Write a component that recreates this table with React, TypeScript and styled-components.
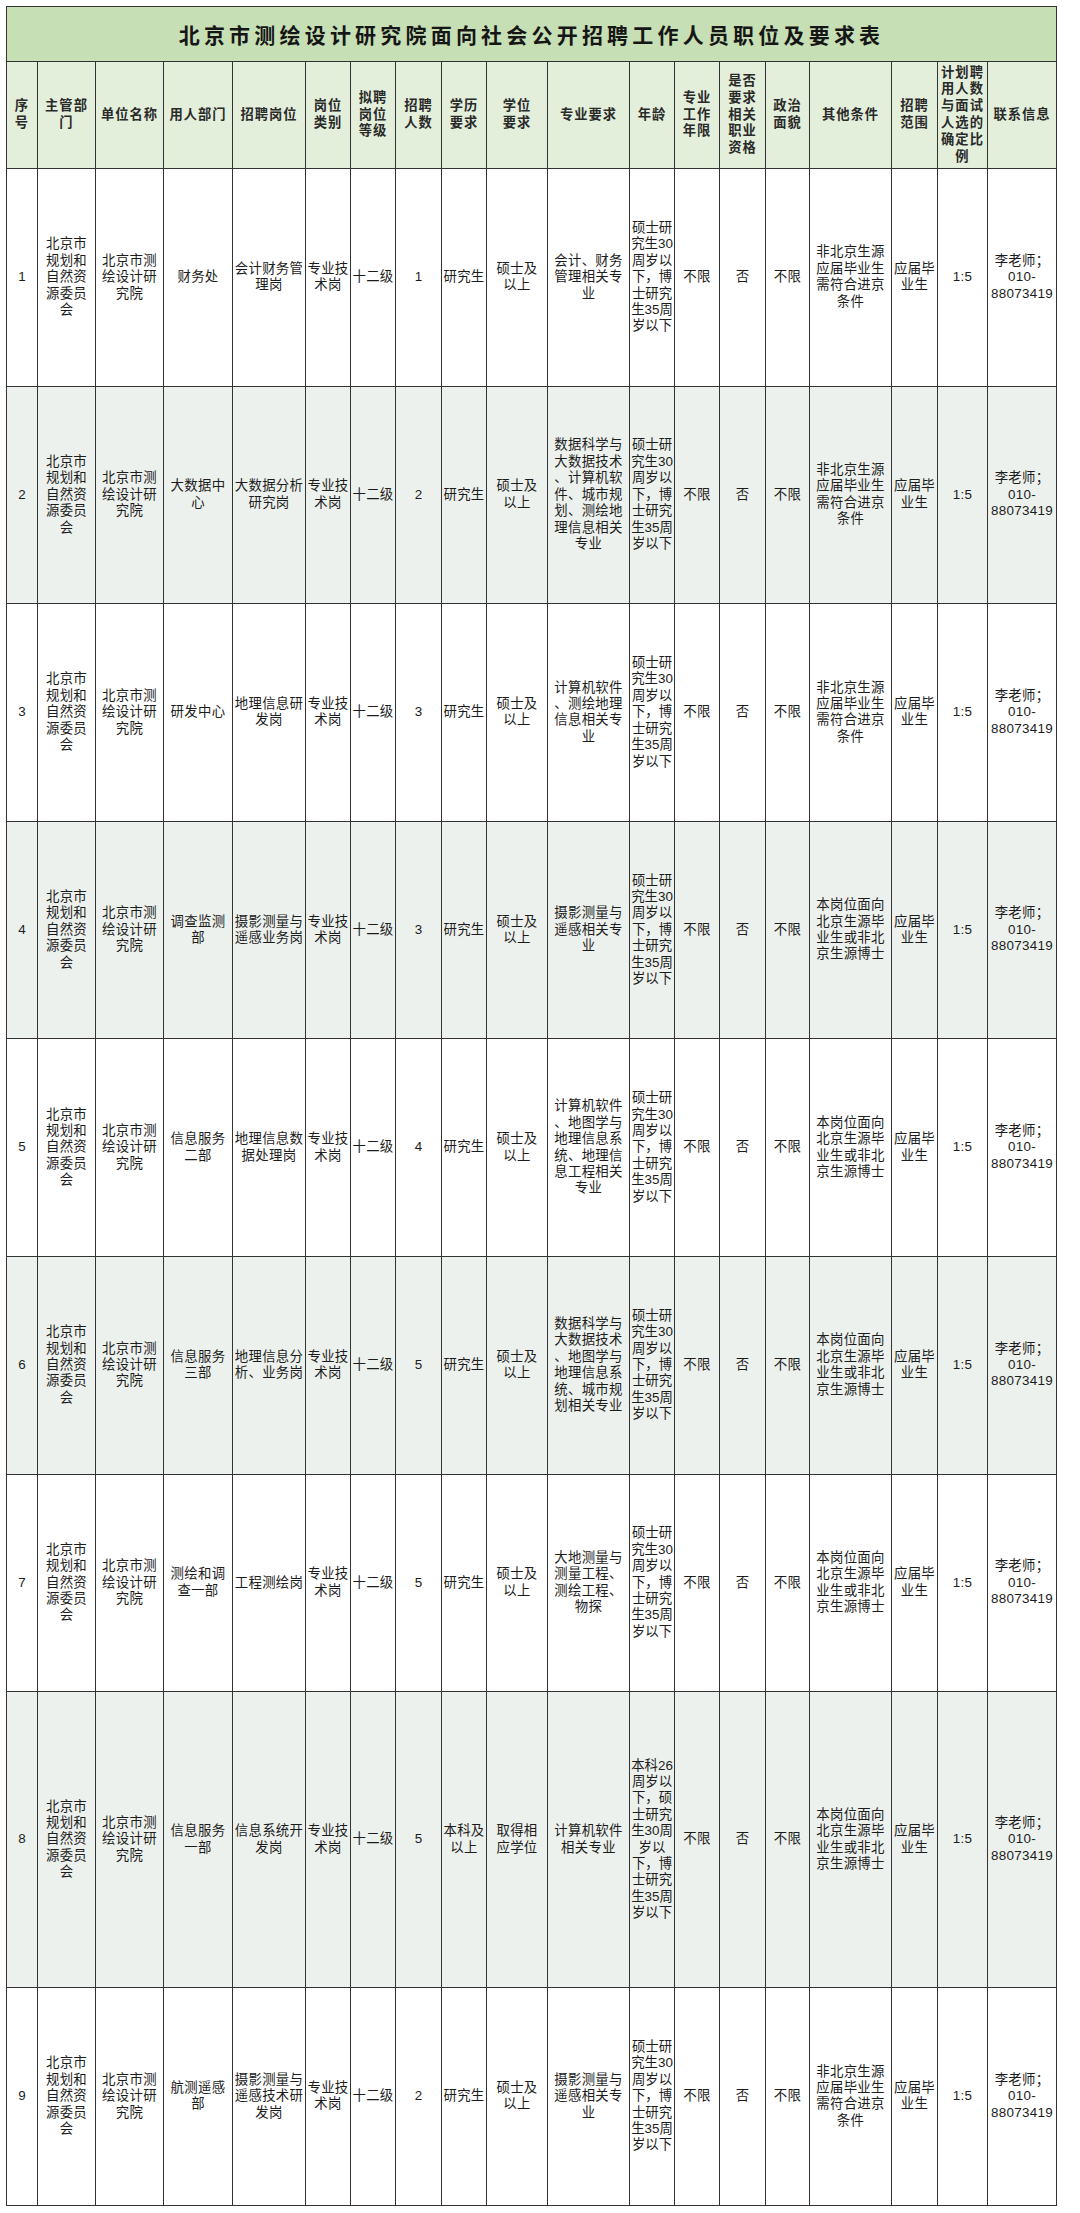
import React from 'react'
import styled, { createGlobalStyle } from 'styled-components'

const GlobalStyle = createGlobalStyle`
  html,
  body {
    margin: 0;
    padding: 0;
    background: #ffffff;
  }

  body {
    font-family: 'Liberation Sans', 'Noto Sans CJK SC', sans-serif;
    color: #1c1c1c;
  }
`

// column widths in px, read off the sheet
const COLUMNS = [31, 58, 68, 69, 73, 45, 45, 46, 45, 61, 82, 45, 45, 46, 44, 82, 46, 50, 69]

const HEADERS = [
  '序\n号',
  '主管部\n门',
  '单位名称',
  '用人部门',
  '招聘岗位',
  '岗位\n类别',
  '拟聘\n岗位\n等级',
  '招聘\n人数',
  '学历\n要求',
  '学位\n要求',
  '专业要求',
  '年龄',
  '专业\n工作\n年限',
  '是否\n要求\n相关\n职业\n资格',
  '政治\n面貌',
  '其他条件',
  '招聘\n范围',
  '计划聘\n用人数\n与面试\n人选的\n确定比\n例',
  '联系信息',
]

const ORG = '北京市\n规划和\n自然资\n源委员\n会'
const UNIT = '北京市测\n绘设计研\n究院'
const AGE = '硕士研\n究生30\n周岁以\n下，博\n士研究\n生35周\n岁以下'
const CONTACT = '李老师；\n010-\n88073419'
const NON_BEIJING = '非北京生源\n应届毕业生\n需符合进京\n条件'
const BEIJING = '本岗位面向\n北京生源毕\n业生或非北\n京生源博士'
const GRAD = '应届毕\n业生'
const TECH = '专业技\n术岗'

type Job = {
  dept: string
  post: string
  count: string
  edu?: string
  degree?: string
  major: string
  age?: string
  other: string
  height?: number
}

const JOBS: Job[] = [
  { dept: '财务处', post: '会计财务管\n理岗', count: '1', major: '会计、财务\n管理相关专\n业', other: NON_BEIJING },
  {
    dept: '大数据中\n心',
    post: '大数据分析\n研究岗',
    count: '2',
    major: '数据科学与\n大数据技术\n、计算机软\n件、城市规\n划、测绘地\n理信息相关\n专业',
    other: NON_BEIJING,
  },
  { dept: '研发中心', post: '地理信息研\n发岗', count: '3', major: '计算机软件\n、测绘地理\n信息相关专\n业', other: NON_BEIJING },
  { dept: '调查监测\n部', post: '摄影测量与\n遥感业务岗', count: '3', major: '摄影测量与\n遥感相关专\n业', other: BEIJING },
  {
    dept: '信息服务\n二部',
    post: '地理信息数\n据处理岗',
    count: '4',
    major: '计算机软件\n、地图学与\n地理信息系\n统、地理信\n息工程相关\n专业',
    other: BEIJING,
  },
  {
    dept: '信息服务\n三部',
    post: '地理信息分\n析、业务岗',
    count: '5',
    major: '数据科学与\n大数据技术\n、地图学与\n地理信息系\n统、城市规\n划相关专业',
    other: BEIJING,
  },
  { dept: '测绘和调\n查一部', post: '工程测绘岗', count: '5', major: '大地测量与\n测量工程、\n测绘工程、\n物探', other: BEIJING },
  {
    dept: '信息服务\n一部',
    post: '信息系统开\n发岗',
    count: '5',
    edu: '本科及\n以上',
    degree: '取得相\n应学位',
    major: '计算机软件\n相关专业',
    age: '本科26\n周岁以\n下，硕\n士研究\n生30周\n岁以\n下，博\n士研究\n生35周\n岁以下',
    other: BEIJING,
    height: 296,
  },
  { dept: '航测遥感\n部', post: '摄影测量与\n遥感技术研\n发岗', count: '2', major: '摄影测量与\n遥感相关专\n业', other: NON_BEIJING },
]

export default function App() {
  return (
    <Page>
      <GlobalStyle />
      <Sheet>
        <colgroup>
          {COLUMNS.map((w, i) => (
            <col key={i} style={{ width: w }} />
          ))}
        </colgroup>
        <thead>
          <TitleRow>
            <TitleCell colSpan={COLUMNS.length}>北京市测绘设计研究院面向社会公开招聘工作人员职位及要求表</TitleCell>
          </TitleRow>
          <HeadRow>
            {HEADERS.map((h, i) => (
              <HeadCell key={i}>{h}</HeadCell>
            ))}
          </HeadRow>
        </thead>
        <tbody>
          {JOBS.map((job, i) => {
            const cells = [
              String(i + 1),
              ORG,
              UNIT,
              job.dept,
              job.post,
              TECH,
              '十二级',
              job.count,
              job.edu ?? '研究生',
              job.degree ?? '硕士及\n以上',
              job.major,
              job.age ?? AGE,
              '不限',
              '否',
              '不限',
              job.other,
              GRAD,
              '1:5',
              CONTACT,
            ]
            return (
              <Row key={i} $shade={i % 2 === 1} $height={job.height ?? 217.6}>
                {cells.map((c, j) => (
                  <Cell key={j} $tight={j === 11}>
                    {c}
                  </Cell>
                ))}
              </Row>
            )
          })}
        </tbody>
      </Sheet>
    </Page>
  )
}

const Page = styled.div`
  padding: 6px 24px 8px 6px;
  width: 1050px;
`
const Sheet = styled.table`
  width: 1050px;
  table-layout: fixed;
  border-collapse: collapse;
  border: 1px solid #333;
`
const TitleRow = styled.tr`
  height: 55px;
  background: #c7dfb4;
`
const TitleCell = styled.th`
  border: 1px solid #333;
  padding: 0;
  font-family: 'Liberation Sans', 'Noto Sans CJK SC', sans-serif;
  font-size: 21px;
  font-weight: 700;
  letter-spacing: 4.2px;
  color: #161616;
  text-align: center;
  vertical-align: middle;
`
const HeadRow = styled.tr`
  height: 107px;
  background: #e3efdb;
`
const HeadCell = styled.th`
  border: 1px solid #333;
  padding: 0 1px;
  font-size: 13.3px;
  font-weight: 700;
  line-height: 16.8px;
  letter-spacing: 1px;
  color: #2a2a2a;
  white-space: pre;
  text-align: center;
  vertical-align: middle;
  overflow: hidden;
`
const Row = styled.tr<{ $shade: boolean; $height: number }>`
  height: ${(p) => p.$height}px;
  background: ${(p) => (p.$shade ? '#edf1ed' : '#ffffff')};
`
const Cell = styled.td<{ $tight?: boolean }>`
  border: 1px solid #333;
  padding: 0;
  font-size: 13.4px;
  line-height: 16.4px;
  letter-spacing: ${(p) => (p.$tight ? '0' : '0.3px')};
  color: #1c1c1c;
  white-space: pre;
  text-align: center;
  vertical-align: middle;
  overflow: hidden;
`
